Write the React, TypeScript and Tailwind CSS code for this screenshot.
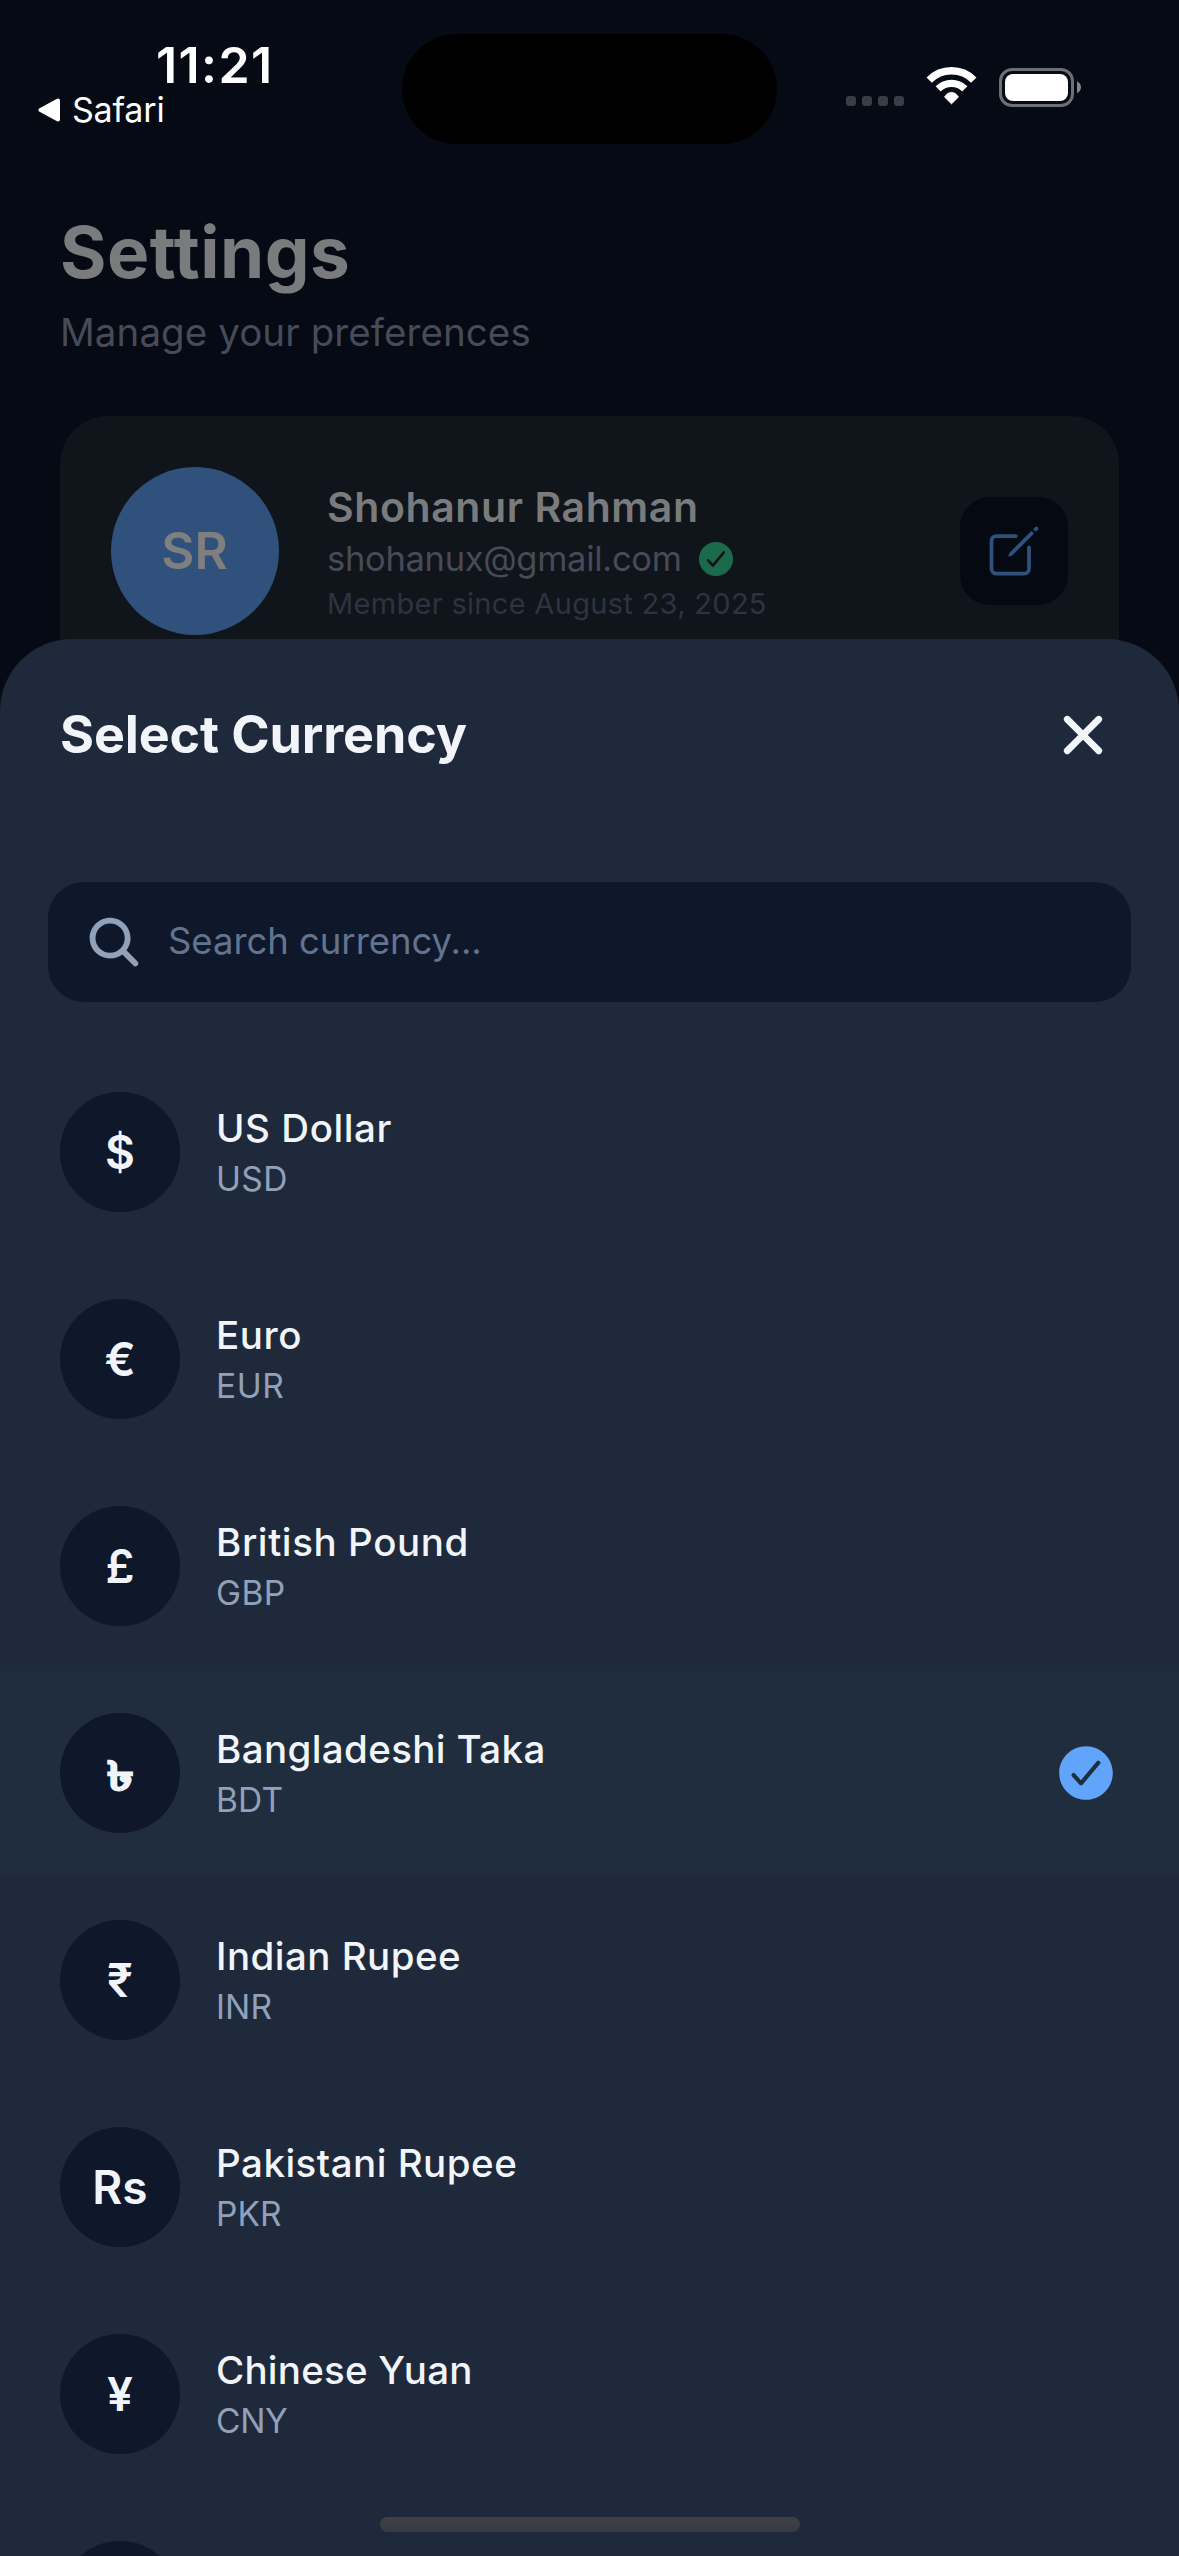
import { IoCheckmarkCircle, IoClose, IoSearch } from "react-icons/io5";

type Currency = { name: string; code: string; symbol: string; tracking: string; codeTracking: string; selected?: boolean };

const currencies: Currency[] = [
  { name: "US Dollar", code: "USD", symbol: "$", tracking: "tracking-[0.57px]", codeTracking: "tracking-[0.4px]" },
  { name: "Euro", code: "EUR", symbol: "€", tracking: "tracking-[0.6px]", codeTracking: "tracking-[0.6px]" },
  { name: "British Pound", code: "GBP", symbol: "£", tracking: "tracking-[0.6px]", codeTracking: "tracking-[0.4px]" },
  { name: "Bangladeshi Taka", code: "BDT", symbol: "৳", tracking: "tracking-[0.38px]", codeTracking: "tracking-[0.2px]", selected: true },
  { name: "Indian Rupee", code: "INR", symbol: "₹", tracking: "tracking-[0.46px]", codeTracking: "tracking-[0.1px]" },
  { name: "Pakistani Rupee", code: "PKR", symbol: "Rs", tracking: "tracking-[0.5px]", codeTracking: "tracking-[0.1px]" },
  { name: "Chinese Yuan", code: "CNY", symbol: "¥", tracking: "tracking-[0.22px]", codeTracking: "tracking-[-0.3px]" },
];

function WifiIcon() {
  return (
    <svg className="mb-px h-10 w-[51px]" viewBox="0 0 51 40" fill="none" stroke="#fff">
      <path d="M3.2 14.1A31.25 31.25 0 0 1 47.8 14.1" strokeWidth="7.5" />
      <path d="M12.2 22.9A18.7 18.7 0 0 1 38.8 22.9" strokeWidth="7.3" />
      <path d="M25.5 38L18.4 31Q21.2 26.2 25.5 26.2T32.6 31Z" fill="#fff" strokeWidth="0.6" strokeLinejoin="round" />
    </svg>
  );
}

function BatteryIcon() {
  return (
    <svg className="h-[39px] w-[83px]" viewBox="0 0 83 39" fill="none">
      <rect x="1.5" y="1.5" width="72" height="36" rx="11.5" stroke="#6d6f76" strokeWidth="3" />
      <rect x="6" y="6" width="63" height="27" rx="8" fill="#fff" />
      <path d="M78 13.3Q82 15.5 82 19.3T78 25.3Z" fill="#85868b" />
    </svg>
  );
}

function EditIcon() {
  return (
    <svg className="size-[60px]" viewBox="0 0 512 512" fill="none">
      <path
        d="M384 224v184a40 40 0 0 1-40 40H104a40 40 0 0 1-40-40V168a40 40 0 0 1 40-40h167.48"
        stroke="#30517c"
        strokeWidth="32"
        strokeLinecap="round"
        strokeLinejoin="round"
      />
      <path
        d="M459.94 53.25a16.06 16.06 0 0 0-23.22-.56L424.35 65a8 8 0 0 0 0 11.31l11.34 11.32a8 8 0 0 0 11.34 0l12.06-12c6.1-6.09 6.67-16.01.85-22.38zM399.34 90L218.82 270.2a9 9 0 0 0-2.31 3.93L208.16 299a3.91 3.91 0 0 0 4.86 4.86l24.85-8.35a9 9 0 0 0 3.93-2.31L422 112.66a9 9 0 0 0 0-12.66l-9.95-10a9 9 0 0 0-12.71 0z"
        fill="#30517c"
      />
    </svg>
  );
}

function StatusBar() {
  return (
    <div className="flex h-[177px] text-white">
      <div className="w-[402px] pt-10">
        <div className="pl-[156px] text-[50px] leading-[50px] font-semibold tracking-[1.4px]">11:21</div>
        <div className="flex items-center pl-[38px]">
          <svg className="h-6 w-[22px]" viewBox="0 0 22 24">
            <path d="M2.5 12L20 2.5V21.5Z" fill="#fff" stroke="#fff" strokeWidth="4" strokeLinejoin="round" />
          </svg>
          <span className="pl-3 text-[34px] leading-10 tracking-[-0.2px]">Safari</span>
        </div>
      </div>
      <div className="mt-[34px] h-[110px] w-[375px] rounded-full bg-black" />
      <div className="flex h-[107px] items-end pl-[69px]">
        <div className="mb-px flex gap-1.5">
          <i className="size-[10px] rounded-[3px] bg-[#3a3d46]" />
          <i className="size-[10px] rounded-[3px] bg-[#3a3d46]" />
          <i className="size-[10px] rounded-[3px] bg-[#3a3d46]" />
          <i className="size-[10px] rounded-[3px] bg-[#3a3d46]" />
        </div>
        <div className="ml-[22px] flex items-end gap-[22px]">
          <WifiIcon />
          <BatteryIcon />
        </div>
      </div>
    </div>
  );
}

function ProfileCard() {
  return (
    <div className="mt-[60px] flex h-[400px] items-start rounded-[48px] bg-[#10141b] px-[51px] pt-[51px]">
      <div className="flex h-[168px] w-full items-center">
        <div className="flex size-[168px] items-center justify-center rounded-full bg-[#30517c] pr-px text-[51px] font-semibold text-[#7f7f7f]">
          SR
        </div>
        <div className="ml-12 flex-1">
          <div className="text-[41px] leading-[52px] font-semibold tracking-[0.58px] text-[#7a7b7c]">Shohanur Rahman</div>
          <div className="mt-1 flex h-11 items-center gap-[13px]">
            <span className="text-[34.5px] leading-[44px] tracking-[-0.3px] text-[#474b57]">shohanux@gmail.com</span>
            <IoCheckmarkCircle className="size-[42px] text-[#1b6a4c]" />
          </div>
          <div className="mt-[5px] text-[29px] leading-9 tracking-[0.31px] text-[#2d3440]">Member since August 23, 2025</div>
        </div>
        <div className="flex size-[108px] items-center justify-center rounded-[30px] bg-[#050912]">
          <EditIcon />
        </div>
      </div>
    </div>
  );
}

function CurrencyRow({ item }: { item: Currency }) {
  return (
    <div className="h-[207px]">
      <div className={`flex h-[204px] items-center px-[60px] ${item.selected ? "bg-[#202d3f]" : ""}`}>
        <div className="flex size-[120px] items-center justify-center rounded-full bg-[#0f172a] text-[46px] font-semibold text-slate-100">
          <span
            className={
              item.symbol === "৳" ? "translate-y-0.5 scale-x-[1.18] scale-y-[0.88] [-webkit-text-stroke:1.6px_#f1f5f9]" : ""
            }
          >
            {item.symbol}
          </span>
        </div>
        <div className="ml-9 flex-1">
          <div className={`text-[38.5px] leading-[46px] font-medium text-slate-100 ${item.tracking}`}>{item.name}</div>
          <div className={`mt-2 text-[33.5px] leading-10 text-slate-400 ${item.codeTracking}`}>{item.code}</div>
        </div>
        {item.selected && <IoCheckmarkCircle className="size-[66px] text-[#60a5fa]" />}
      </div>
    </div>
  );
}

function CurrencySheet() {
  return (
    <div className="absolute inset-x-0 top-[639px] bottom-0 overflow-hidden rounded-t-[72px] bg-[#1e293b] pt-[60px]">
      <div className="flex h-[72px] items-center justify-between px-[60px]">
        <h2 className="text-[52px] leading-[60px] font-bold tracking-[-0.12px] text-slate-100">Select Currency</h2>
        <IoClose className="size-[72px] text-slate-100" />
      </div>
      <div className="mx-12 mt-[111px] flex h-[120px] items-center gap-6 rounded-[36px] bg-[#0f172a] px-9">
        <IoSearch className="size-[60px] text-slate-400" />
        <span className="pb-0.5 text-[36.5px] tracking-[-0.05px] text-slate-500">Search currency...</span>
      </div>
      <div className="mt-12">
        {currencies.map((item) => (
          <CurrencyRow key={item.code} item={item} />
        ))}
        <div className="px-[60px] pt-[42px]">
          <div className="size-[120px] rounded-full bg-[#0f172a]" />
        </div>
      </div>
      <div className="absolute bottom-6 left-[380px] h-[15px] w-[420px] rounded-full bg-linear-to-b from-[#404144] to-[#363b42]" />
    </div>
  );
}

export default function App() {
  return (
    <div className="relative h-[2556px] w-[1179px] overflow-hidden bg-[#050a14] font-['Inter',sans-serif]">
      <StatusBar />
      <div className="px-[60px] pt-[35px]">
        <h1 className="text-[71px] leading-[80px] font-bold tracking-[0.49px] text-[#7a7b7c]">Settings</h1>
        <p className="mt-4 text-[38.5px] leading-[48px] tracking-[0.08px] text-[#474b57]">Manage your preferences</p>
        <ProfileCard />
      </div>
      <CurrencySheet />
    </div>
  );
}
